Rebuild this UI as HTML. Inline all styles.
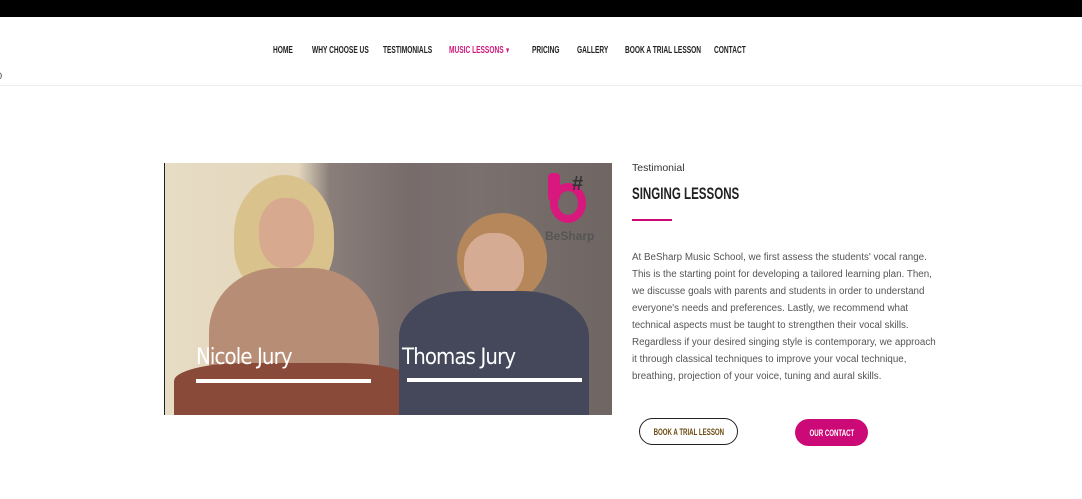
<!DOCTYPE html>
<html><head><meta charset="utf-8"><style>
*{margin:0;padding:0;box-sizing:border-box}
body{width:1082px;height:499px;background:#fff;font-family:"Liberation Sans",sans-serif;position:relative;overflow:hidden}
.top{position:absolute;left:0;top:0;width:1082px;height:17px;background:#000}
.nav{position:absolute;top:45px;left:0;height:14px;font-family:"Liberation Sans",sans-serif;font-weight:bold;font-size:10px;color:#222;white-space:nowrap}
.nav span{position:absolute;top:0;transform:scaleX(.66);transform-origin:left}
.hline{position:absolute;left:0;top:85px;width:1082px;height:1px;background:#ececf0}
.photo{position:absolute;left:164px;top:163px;width:448px;height:252px;overflow:hidden;background:linear-gradient(90deg,#e7dcc4 0,#e3d6bd 30%,#8a7e7a 37%,#776c6b 55%,#7a706e 70%,#6f6562 100%)}
.photo div{position:absolute}
.name{color:#fff;font-size:22px;font-family:"DejaVu Sans",sans-serif;letter-spacing:-1px;transform:scaleX(.9);transform-origin:left}
.bar{height:4px;background:#fff}
.side{position:absolute;left:632px}
p.body{position:absolute;left:632px;top:249px;width:308px;font-size:9.8px;line-height:17px;color:#555}
.btn{position:absolute;height:27px;border-radius:14px;font-weight:bold;font-size:9px;display:flex;align-items:center;justify-content:center;white-space:nowrap}
.btn span{display:inline-block;transform:scaleX(.68)}
</style></head><body>
<div class="top"></div>
<div class="nav">
<span style="left:273px">HOME</span>
<span style="left:312px">WHY CHOOSE US</span>
<span style="left:383px">TESTIMONIALS</span>
<span style="left:449px;color:#d0197c">MUSIC LESSONS</span>
<span style="left:505px;color:#d0197c;font-size:8px;top:1px">▼</span>
<span style="left:532px">PRICING</span>
<span style="left:577px">GALLERY</span>
<span style="left:625px">BOOK A TRIAL LESSON</span>
<span style="left:714px">CONTACT</span>
</div>
<div style="position:absolute;left:-3px;top:71px;font-size:9px;color:#333">0</div>
<div class="hline"></div>

<div class="photo">
 <div style="left:0;top:0;width:1px;height:252px;background:#222"></div>
 <div style="left:70px;top:12px;width:100px;height:120px;border-radius:50% 50% 40% 40%;background:#d9c28c"></div>
 <div style="left:95px;top:35px;width:55px;height:70px;border-radius:45%;background:#d7a98f"></div>
 <div style="left:45px;top:105px;width:170px;height:160px;border-radius:40% 40% 0 0;background:#b88d75"></div>
 <div style="left:10px;top:200px;width:240px;height:60px;background:#8a4a3a;border-radius:30% 30% 0 0"></div>
 <div style="left:293px;top:50px;width:90px;height:90px;border-radius:50%;background:#b5875a"></div>
 <div style="left:300px;top:70px;width:60px;height:65px;border-radius:45%;background:#d6ab93"></div>
 <div style="left:235px;top:128px;width:190px;height:130px;border-radius:35% 35% 0 0;background:#44485a"></div>
 <div style="left:386px;top:20px;width:36px;height:40px;border-radius:50%;border:8px solid #d9187d"></div>
 <div style="left:384px;top:10px;width:12px;height:28px;background:#d9187d;border-radius:4px"></div>
 <div style="left:408px;top:10px;font-size:20px;font-weight:bold;color:#333">#</div>
 <div style="left:381px;top:66px;font-size:12px;font-weight:bold;color:#555">BeSharp</div>
 <div class="name" style="left:32px;top:182px">Nicole Jury</div>
 <div class="bar" style="left:32px;top:216px;width:175px"></div>
 <div class="name" style="left:238px;top:182px">Thomas Jury</div>
 <div class="bar" style="left:243px;top:215px;width:175px"></div>
</div>

<div class="side" style="top:162px;font-size:10.5px;color:#333">Testimonial</div>
<div class="side" style="top:184px;font-weight:bold;font-size:17px;color:#222;transform:scaleX(.68);transform-origin:left;white-space:nowrap">SINGING LESSONS</div>
<div class="side" style="top:219px;width:40px;height:2px;background:#cf0a78"></div>
<p class="body">At BeSharp Music School, we first assess the students' vocal range. This is the starting point for developing a tailored learning plan. Then, we discusse goals with parents and students in order to understand everyone's needs and preferences. Lastly, we recommend what technical aspects must be taught to strengthen their vocal skills. Regardless if your desired singing style is contemporary, we approach it through classical techniques to improve your vocal technique, breathing, projection of your voice, tuning and aural skills.</p>
<div class="btn" style="left:639px;top:418px;width:99px;border:1px solid #222;color:#6a4a10"><span>BOOK A TRIAL LESSON</span></div>
<div class="btn" style="left:795px;top:419px;width:73px;background:#cc0a77;color:#fff"><span>OUR CONTACT</span></div>
</body></html>
